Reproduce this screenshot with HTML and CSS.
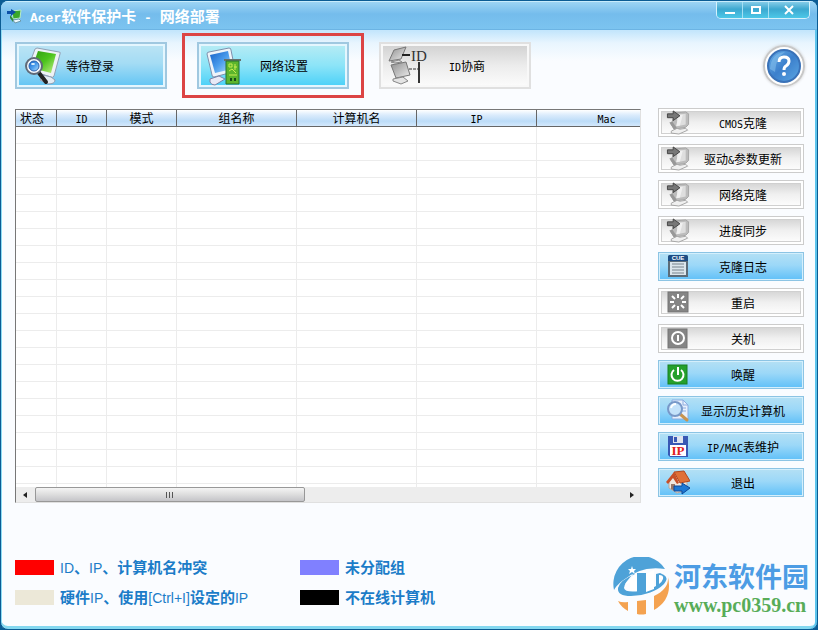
FILE: index.html
```html
<!DOCTYPE html>
<html lang="zh-CN">
<head>
    <meta charset="UTF-8">
    <meta name="viewport" content="width=device-width, initial-scale=1.0">
    <link rel="stylesheet" href="styles.css">
    <title>Acer软件保护卡 - 网络部署</title>
</head>
<body>

    <!-- Gradients and the clone icon, shared by several buttons -->
    <svg class="defs" width="0" height="0" aria-hidden="true">
        <defs>
            <linearGradient id="green" x1="0" y1="0" x2="1" y2="1">
                <stop offset="0" stop-color="#2f9a10"/><stop offset="0.5" stop-color="#4cc41c"/><stop offset="1" stop-color="#c4f08a"/>
            </linearGradient>
            <linearGradient id="blue" x1="0" y1="0" x2="1" y2="1">
                <stop offset="0" stop-color="#1560c8"/><stop offset="0.5" stop-color="#4a9cec"/><stop offset="1" stop-color="#b4e0fc"/>
            </linearGradient>
            <linearGradient id="grey" x1="0" y1="0" x2="1" y2="1">
                <stop offset="0" stop-color="#8e8e8e"/><stop offset="1" stop-color="#ececec"/>
            </linearGradient>
            <linearGradient id="help" x1="0" y1="0" x2="1" y2="1">
                <stop offset="0" stop-color="#6ab0e8"/><stop offset="0.5" stop-color="#3c80cc"/><stop offset="1" stop-color="#5ca8e4"/>
            </linearGradient>
        </defs>
        <symbol id="clone" viewBox="0 0 24 26">
            <path d="M9 3l11-1 3 2v11l-3 3-12 2-3-5z" fill="#bcbcbc" stroke="#a4a4a4"/>
            <path d="M11 5l9-1v11l-9 2z" fill="#dedede"/>
            <path d="M13 5h4l-3 11-4 1z" fill="#f0f0f0"/>
            <path d="M3 13l3-1 5 7-2 3z" fill="#989898"/>
            <path d="M5 22l6-3 3 1 6-1 2 2-9 4-8-1z" fill="#f0f0f0" stroke="#a4a4a4"/>
            <path d="M1 4h6V1l7 5-7 5V8H1z" fill="#777" stroke="#444"/>
        </symbol>
    </svg>

    <div class="window">
        <header class="titlebar">
            <svg class="app-icon" width="16" height="16" viewBox="0 0 16 16">
                <path d="M5 3l9-1-1 8-7 1z" fill="#3aa82a" stroke="#b8ecc8"/>
                <path d="M3 7l4 5-1 2-3-4z" fill="#2d8a38"/>
                <path d="M6 12l6-1 2 2-6 2z" fill="#eefaff" stroke="#6d9aac"/>
                <path d="M0 3h4V1l5 3-5 4V6H0z" fill="#0c50a8"/>
            </svg>
            <h1><span class="en">Acer</span>软件保护卡<span class="en"> - </span>网络部署</h1>
            <div class="controls">
                <button aria-label="最小化"><svg width="12" height="10"><path d="M1 8h10" stroke="#fff" stroke-width="2"/></svg></button>
                <button aria-label="最大化"><svg width="12" height="10"><rect x="2" y="2" width="8" height="6" fill="none" stroke="#fff" stroke-width="2"/></svg></button>
                <button class="close" aria-label="关闭"><svg width="12" height="10"><path d="M2 1l8 8M10 1l-8 8" stroke="#fff" stroke-width="2"/></svg></button>
            </div>
        </header>

        <nav class="toolbar">
            <button class="tool left">
                <svg width="38" height="40" viewBox="0 0 38 40">
                    <path d="M14 2l22 4q2 0 1 2l-6 22q-1 2-3 1L6 24q-2 0-1-2L12 3z" fill="#eef2f6" stroke="#90a0b4"/>
                    <path d="M15 5l18 3-5 19-19-5z" fill="url(#green)"/>
                    <path d="M20 29l8 2 4 3q0 4-7 4l-8-4z" fill="#e4ecf4" stroke="#909cb0"/>
                    <path d="M16 27l7 9" stroke="#222" stroke-width="4" stroke-linecap="round"/>
                    <circle cx="11" cy="20" r="8" fill="#f4f8fc" stroke="#606a78" stroke-width="2"/>
                    <circle cx="11" cy="20" r="5" fill="url(#blue)" stroke="#2c64b0"/>
                    <ellipse cx="10" cy="18" rx="2" ry="1" fill="#e0f4ff"/>
                </svg>
                <span>等待登录</span>
            </button>
            <div class="highlight">
                <button class="tool active">
                    <svg width="38" height="40" viewBox="0 0 38 40">
                        <path d="M4 6l20-4q2 0 2 2l4 20q0 2-2 2L9 31q-2 0-2-2L2 8q0-2 2-2z" fill="#eef4fa" stroke="#8090ac"/>
                        <path d="M5 9l18-4 4 18-17 4z" fill="url(#blue)"/>
                        <path d="M5 33l9-3 6 3-10 6q-4 0-5-3z" fill="#e8eaf6" stroke="#7c84a8"/>
                        <path d="M19 14h17" stroke="#66706c" stroke-width="2"/>
                        <path d="M21 15h13v23H21z" fill="#5cb52c" stroke="#267330"/>
                        <path d="M24 18h3v3h-3zM29 21h3M24 25l3-2 4 4M30 18v6M24 29h8" fill="none" stroke="#c8ec50"/>
                        <path d="M25 32h2v3h-2zM29 32h2v3h-2z" fill="#184c18"/>
                    </svg>
                    <span>网络设置</span>
                </button>
            </div>
            <button class="tool" disabled>
                <svg width="40" height="40" viewBox="0 0 40 40">
                    <path d="M7 4l12-3-5 12-12 2z" fill="url(#grey)" stroke="#777"/>
                    <path d="M4 16l8-2 3 2-7 1z" fill="#ddd" stroke="#888"/>
                    <path d="M4 19l15-3 4 13-14 3z" fill="url(#grey)" stroke="#777"/>
                    <path d="M6 33l10-2 5 4-7 3-8-3z" fill="#e4e4e4" stroke="#888"/>
                    <path d="M15 9h8" stroke="#222" stroke-width="2"/>
                    <path d="M22 23h9" stroke="#333" stroke-dasharray="3 1"/>
                    <path d="M32 16v21" stroke="#333" stroke-width="2"/>
                    <text x="24" y="15" class="icon-id">ID</text>
                </svg>
                <span><span class="en">ID</span>协商</span>
            </button>
            <button class="help" aria-label="帮助">
                <svg width="42" height="42" viewBox="0 0 42 42">
                    <circle cx="21" cy="21" r="20" fill="#fff" stroke="#c8c8c8" stroke-width="2"/>
                    <circle cx="21" cy="21" r="16" fill="url(#help)" stroke="#3a72b8" stroke-width="2"/>
                    <path d="M7 24Q8 8 22 7q-9 5-10 20z" fill="#8cc6f0" opacity="0.5"/>
                    <path d="M16 17q0-5 5-5t5 4q0 3-3 5-2 1-2 4" fill="none" stroke="#fff" stroke-width="3"/>
                    <circle cx="21" cy="29" r="2" fill="#fff"/>
                </svg>
            </button>
        </nav>

        <main class="content">
            <section class="list">
                <div class="viewport">
                    <table>
                        <colgroup>
                            <col class="col-state"><col class="col-id"><col class="col-mode"><col class="col-wide"><col class="col-wide"><col class="col-wide"><col class="col-mac">
                        </colgroup>
                        <thead>
                            <tr>
                                <th class="first">状态</th>
                                <th><span class="en">ID</span></th>
                                <th>模式</th>
                                <th>组名称</th>
                                <th>计算机名</th>
                                <th><span class="en">IP</span></th>
                                <th><span class="en">Mac</span></th>
                            </tr>
                        </thead>
                        <tbody id="filas"></tbody>
                    </table>
                </div>
                <div class="scrollbar">
                    <svg width="19" height="14"><path d="M11 4v6L7 7z" fill="#222"/></svg>
                    <div class="track">
                        <div class="thumb"><i></i><i></i><i></i></div>
                    </div>
                    <svg width="19" height="14"><path d="M9 4v6l4-3z" fill="#222"/></svg>
                </div>
            </section>

            <aside class="actions">
                <button disabled><svg width="24" height="25"><use href="#clone"/></svg><span><span class="en">CMOS</span>克隆</span></button>
                <button disabled><svg width="24" height="25"><use href="#clone"/></svg><span>驱动<span class="en">&amp;</span>参数更新</span></button>
                <button disabled><svg width="24" height="25"><use href="#clone"/></svg><span>网络克隆</span></button>
                <button disabled><svg width="24" height="25"><use href="#clone"/></svg><span>进度同步</span></button>
                <button>
                    <svg width="24" height="25" viewBox="0 0 24 25">
                        <path d="M2 3q0-2 2-2h16q2 0 2 2v20H2z" fill="#5c6c78"/>
                        <path d="M2 3q0-2 2-2h16q2 0 2 2v4H2z" fill="#1c4c84"/>
                        <path d="M4 8h16v13H4z" fill="#dce6ec"/>
                        <path d="M6 10h12M6 13h12M6 16h12M6 19h12" stroke="#78848c"/>
                        <text x="12" y="6" class="icon-cue">CUE</text>
                    </svg>
                    <span>克隆日志</span>
                </button>
                <button disabled>
                    <svg width="24" height="25" viewBox="0 0 24 25">
                        <rect x="2" y="2" width="20" height="20" fill="#858585" stroke="#747474"/>
                        <path d="M12 4v4M12 16v4M4 12h4M16 12h4M6 6l3 3M15 15l3 3M18 6l-3 3M9 15l-3 3" stroke="#fff" stroke-width="2"/>
                    </svg>
                    <span>重启</span>
                </button>
                <button disabled>
                    <svg width="24" height="25" viewBox="0 0 24 25">
                        <rect x="2" y="3" width="19" height="19" fill="#858585" stroke="#747474"/>
                        <circle cx="12" cy="12" r="6" fill="none" stroke="#fff" stroke-width="2"/>
                        <path d="M12 9v6" stroke="#fff" stroke-width="2"/>
                    </svg>
                    <span>关机</span>
                </button>
                <button>
                    <svg width="24" height="25" viewBox="0 0 24 25">
                        <rect x="2" y="3" width="19" height="19" fill="#24a02c" stroke="#168020"/>
                        <path d="M8 8a6 6 0 1 0 7 0" fill="none" stroke="#fff" stroke-width="2"/>
                        <path d="M12 5v8" stroke="#fff" stroke-width="2"/>
                    </svg>
                    <span>唤醒</span>
                </button>
                <button>
                    <svg width="24" height="25" viewBox="0 0 24 25">
                        <path d="M6 2h11l5 5v14H6z" fill="#e8f0fc" stroke="#8cace0"/>
                        <path d="M17 2v5h5M15 10h5M15 13h5" fill="none" stroke="#8cace0"/>
                        <path d="M14 16l7 6" stroke="#c89450" stroke-width="3" stroke-linecap="round"/>
                        <circle cx="9" cy="11" r="7" fill="#c4e2fa" stroke="#7898c8" stroke-width="2"/>
                        <path d="M5 10q1-4 5-4" fill="none" stroke="#fff" stroke-width="2"/>
                    </svg>
                    <span>显示历史计算机</span>
                </button>
                <button>
                    <svg width="24" height="25" viewBox="0 0 24 25">
                        <path d="M2 2h20v21H4l-2-2z" fill="#3858b4"/>
                        <path d="M7 2h10v7H7z" fill="#dfe4ee"/>
                        <path d="M8 3h3v5H8z" fill="#3858b4"/>
                        <path d="M4 11h16v11H4z" fill="#fff"/>
                        <text x="12" y="21" class="icon-ip">IP</text>
                    </svg>
                    <span><span class="en">IP/MAC</span>表维护</span>
                </button>
                <button>
                    <svg width="24" height="25" viewBox="0 0 24 25">
                        <path d="M3 11l5-7 13 7v9l-10 3-8-5z" fill="#f0e8e0" stroke="#b8a8a0"/>
                        <path d="M8 2l10-1 6 10-10 2z" fill="#e07038" stroke="#b04820"/>
                        <path d="M0 12L8 2l5 11-2 1-4-6-5 6z" fill="#c85028"/>
                        <path d="M5 14h4v7l-4-2z" fill="#987868"/>
                        <path d="M8 16h8v-3l8 5-8 6v-3H8z" fill="#1c78d4" stroke="#0c4898"/>
                    </svg>
                    <span>退出</span>
                </button>
            </aside>
        </main>

        <footer class="footer">
            <ul class="legend">
                <li><i class="swatch red"></i><span><span class="en">ID</span>、<span class="en">IP</span>、计算机名冲突</span></li>
                <li><i class="swatch violet"></i><span>未分配组</span></li>
                <li><i class="swatch beige"></i><span>硬件<span class="en">IP</span>、使用<span class="en">[Ctrl+I]</span>设定的<span class="en">IP</span></span></li>
                <li><i class="swatch black"></i><span>不在线计算机</span></li>
            </ul>
            <div class="brand">
                <svg width="58" height="58" viewBox="0 0 58 58">
                    <path d="M1 33A28 28 0 0 1 52 12Q28 8 9 24 3 29 1 33z" fill="#4ea2d8"/>
                    <path d="M22 17Q7 23 5 31q-1 8 13 8 22-1 33-12 5-6 0-9l-4-2-4 1v12q-8 5-16 5-15 2-16-3 0-5 11-16z" fill="#4ea2d8"/>
                    <path d="M12 27l12-11v18h-7V26z" fill="#fff"/>
                    <path d="M24 16h9v18l-9 1z" fill="#4ea2d8"/>
                    <path d="M33 17l8-4v19l-8 3z" fill="#fff"/>
                    <path d="M46 18q5 0 4 4-1 3-4 5z" fill="#fff"/>
                    <path d="M55 20q5 22-14 33V39q15-7 14-19z" fill="#f4a250"/>
                    <path d="M5 44q4 2 10 1v9Q8 50 5 44zM24 44l9-1v14q-5 1-9 0z" fill="#f4a250"/>
                    <path d="M19 9l1 3h3l-2 2 1 3-3-2-3 2 1-3-2-2h3z" fill="#fff"/>
                </svg>
                <div class="brand-text">
                    <strong>河东软件园</strong>
                    <a href="#">www.pc0359.cn</a>
                </div>
            </div>
        </footer>
    </div>

    <script>
        // Empty rows of the computer list
        const filas = document.getElementById("filas");
        for (let i = 0; i < 22; i++) {
            const fila = filas.insertRow();
            for (let j = 0; j < 7; j++) {
                fila.insertCell();
            }
        }
    </script>

</body>
</html>
```
FILE: styles.css
```css
* {
    box-sizing: border-box;
}

body {
    margin: 0;
    background-color: #0b5c94;
    font-family: "Noto Sans CJK SC", sans-serif;
    font-size: 12px;
    color: #000;
}

button {
    font: inherit;
    color: #000;
    cursor: pointer;
}

svg {
    display: block;
    flex: none;
}

.defs {
    position: absolute;
}

.en {
    font-family: "DejaVu Sans Mono", monospace;
    font-size: 10px;
    line-height: 1;
    white-space: pre;
}

.window {
    display: flex;
    flex-direction: column;
    min-height: 100vh;
    border: 1px solid #0b5c94;
    border-radius: 8px;
    box-shadow: inset 1px 0 #8cdcf4, inset -2px 0 #5cc4ec, inset 0 -3px #84d8f0;
    background: linear-gradient(#c4e6fc 30px, #e8f5fe 42px, #fafcff 60px);
    overflow: hidden;
}

/* Title bar */
.titlebar {
    display: flex;
    align-items: center;
    height: 29px;
    padding: 0 7px 0 6px;
    border-top: 1px solid #c8ecfc;
    border-bottom: 1px solid #6cb4e4;
    background: linear-gradient(#9cd4f4, #74bcec 45%, #7cc4f0);
}

.titlebar h1 {
    flex: 1;
    margin: 0 0 0 7px;
    font-size: 15px;
    line-height: 20px;
    color: #fff;
}

.titlebar .en {
    font-family: "Liberation Mono", monospace;
    font-size: 13px;
}

.controls {
    display: flex;
    align-self: flex-start;
    border: 1px solid #d4f2fc;
    border-top: none;
    border-radius: 0 0 5px 5px;
    overflow: hidden;
}

.controls button {
    display: flex;
    align-items: center;
    justify-content: center;
    width: 26px;
    height: 16px;
    padding: 0;
    border: none;
    border-right: 1px solid #a4e0f4;
    background: linear-gradient(#84cce8, #3ca8d0 45%, #4cc8e8);
}

.controls .close {
    width: 40px;
    border-right: none;
}

/* Toolbar */
.toolbar {
    display: flex;
    align-items: center;
    gap: 15px;
    padding: 3px 12px 0 14px;
}

.tool {
    display: flex;
    align-items: center;
    width: 152px;
    height: 47px;
    padding: 0 22px 0 6px;
    border: 2px solid #a0c8e0;
    box-shadow: inset 0 0 0 2px #e4f6fe;
    background: linear-gradient(#bce4f4, #a4dcf4 45%, #60c4f4);
}

.tool > span {
    flex: 1;
    text-align: center;
}

.tool.left > span {
    padding-left: 5px;
    text-align: left;
}

.tool.active {
    background: linear-gradient(#b8ecf4, #8ce4f8 50%, #48d0f8);
}

.tool:disabled {
    border-color: #e0e0e0;
    box-shadow: inset 0 0 0 2px #f8f8f8;
    background: linear-gradient(#d0d0d0, #ececec 50%, #fcfcfc);
    cursor: default;
}

.highlight {
    padding: 6px 12px;
    border: 3px solid #dc4444;
}

.icon-id {
    font-family: "Liberation Serif", serif;
    font-size: 15px;
    fill: #333;
}

.icon-cue {
    font-family: "Liberation Sans", sans-serif;
    font-size: 6px;
    font-weight: bold;
    text-anchor: middle;
    fill: #fff;
}

.icon-ip {
    font-family: "Liberation Serif", serif;
    font-size: 13px;
    font-weight: bold;
    text-anchor: middle;
    fill: #e02020;
}

.help {
    margin-left: auto;
    padding: 0;
    border: none;
    border-radius: 50%;
    background: none;
    box-shadow: 0 0 3px #ccc;
}

/* List of computers */
.content {
    display: flex;
    align-items: flex-start;
    gap: 17px;
    padding: 10px 13px 0 14px;
}

.list {
    flex: 1;
    min-width: 0;
    margin-top: 1px;
    border: 1px solid #e0e0e0;
    border-top: 1px solid #777;
    border-left: 1px solid #777;
    background-color: #fff;
}

.viewport {
    height: 377px;
    overflow: hidden;
}

table {
    width: 661px;
    table-layout: fixed;
    border-collapse: separate;
    border-spacing: 0;
}

.col-state { width: 41px; }
.col-id { width: 50px; }
.col-mode { width: 70px; }
.col-wide { width: 120px; }
.col-mac { width: 140px; }

th {
    height: 17px;
    padding: 0;
    border-right: 1px solid #666;
    border-bottom: 1px solid #666;
    background: linear-gradient(#fff, #dcecfc 30%, #bcdcf8 70%, #d4e8fc);
    font-weight: normal;
    line-height: 14px;
}

th.first {
    padding-left: 4px;
    text-align: left;
}

td {
    height: 17px;
    padding: 0;
    border-right: 1px solid #ececec;
    border-bottom: 1px solid #ececec;
}

.scrollbar {
    display: flex;
    align-items: center;
    background-color: #ededed;
}

.track {
    flex: 1;
}

.thumb {
    display: flex;
    align-items: center;
    justify-content: center;
    gap: 2px;
    width: 46%;
    height: 15px;
    border: 1px solid #989898;
    border-radius: 2px;
    background: linear-gradient(#f4f4f4, #e0e0e0 45%, #c4c4c8);
}

.thumb i {
    width: 1px;
    height: 6px;
    background-color: #555;
}

/* Buttons on the right */
.actions {
    display: flex;
    flex-direction: column;
    gap: 7px;
    width: 146px;
}

.actions button {
    display: flex;
    align-items: center;
    height: 29px;
    padding: 0 7px;
    border: 1px solid #8cc4e4;
    box-shadow: inset 0 0 0 1px #d4effc;
    background: linear-gradient(#b4e0f4, #9cd8f8 45%, #60c0f8);
    white-space: nowrap;
}

.actions button > span {
    flex: 1;
    text-align: center;
}

.actions button:disabled {
    border-color: #ccc;
    box-shadow: inset 0 0 0 2px #fff, inset 0 0 0 3px #d0d0d0;
    background: linear-gradient(#d0d0d0, #f0f0f0 50%, #fff);
    cursor: default;
}

/* Legend and brand */
.footer {
    display: flex;
    justify-content: space-between;
    padding: 54px 8px 0 14px;
}

.legend {
    display: grid;
    grid-template-columns: 285px auto;
    grid-auto-rows: 20px;
    row-gap: 10px;
    margin: 0;
    padding: 0;
    list-style: none;
    font-size: 15px;
    font-weight: bold;
    line-height: 20px;
    color: #1c7cc8;
}

.legend li {
    display: flex;
    align-items: center;
    gap: 6px;
}

.legend .en {
    font-family: "Liberation Sans", sans-serif;
    font-size: 14px;
    font-weight: normal;
}

.swatch {
    width: 39px;
    height: 15px;
}

.red { background-color: #f00; }
.violet { background-color: #8080ff; }
.beige { background-color: #ece8d8; }
.black { background-color: #000; }

.brand {
    display: flex;
    gap: 3px;
}

.brand-text {
    display: flex;
    flex-direction: column;
    padding-top: 3px;
}

.brand-text strong {
    font-size: 27px;
    line-height: 32px;
    color: #4c9ce4;
}

.brand-text a {
    font-family: "Liberation Serif", serif;
    font-size: 20px;
    font-weight: bold;
    line-height: 26px;
    color: #58ac58;
    text-decoration: none;
}
```
